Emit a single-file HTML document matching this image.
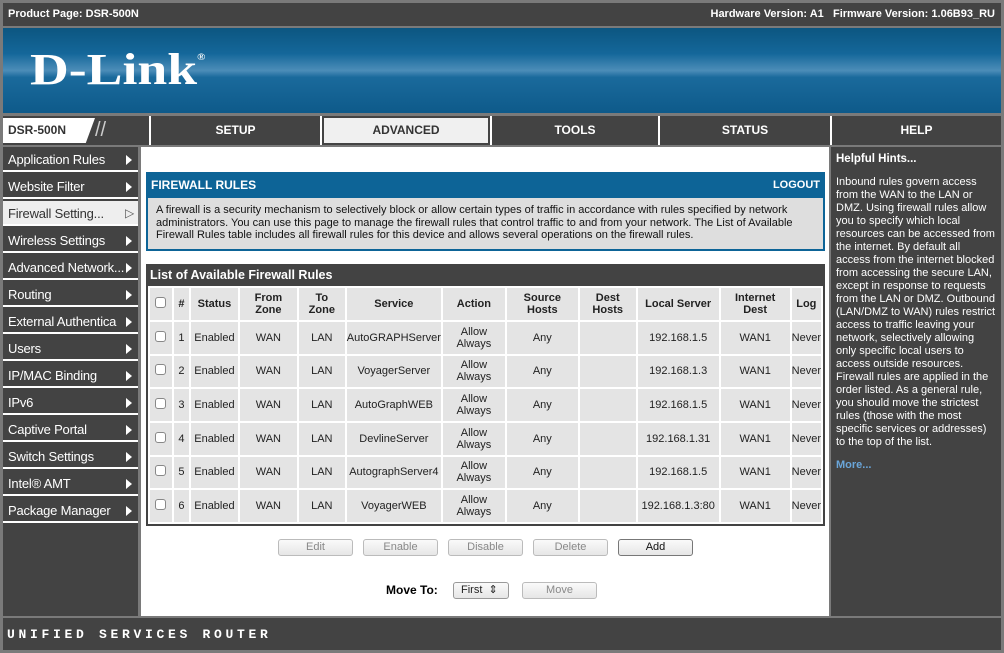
<!DOCTYPE html>
<html><head><style>
*{margin:0;padding:0;box-sizing:border-box}
body{width:1004px;height:653px;background:#7a7a7a;font-family:"Liberation Sans",sans-serif;position:relative;overflow:hidden}
.abs{position:absolute}
#top{left:3px;top:3px;width:998px;height:23px;background:#434343;color:#fff;font-size:11px;font-weight:bold;line-height:23px}
#banner{left:3px;top:28px;width:998px;height:85px;background:linear-gradient(180deg,#0c5680 0%,#14679a 30%,#4c8db8 50%,#1a6a9c 58%,#0e5a8a 100%)}
#logo{left:30px;top:44px;color:#fff;font:bold 44px "Liberation Serif",serif;letter-spacing:0px;transform:scaleX(1.22);transform-origin:left top}
#nav{left:3px;top:116px;width:998px;height:29px;background:#fff}
.tab{position:absolute;top:0;height:29px;background:#434343;color:#fff;font:bold 12px "Liberation Sans",sans-serif;text-align:center;line-height:29px}
#side{left:3px;top:147px;width:135px;height:469px;background:#434343}
.it{position:absolute;left:0;width:135px;height:25px;color:#fff;font:13px "Liberation Sans",sans-serif;line-height:25px;padding-left:5px;border-bottom:2px solid #fff;letter-spacing:-0.2px}
.it:after{content:"";position:absolute;right:6px;top:8px;border-left:6px solid #fff;border-top:5px solid transparent;border-bottom:5px solid transparent}
.it.sel{background:#eee;color:#333}
.it.sel:after{content:"▷";border:none;top:0;right:4px;color:#555;font-size:12px}
#main{left:141px;top:147px;width:688px;height:469px;background:#fff}
#help{left:831px;top:147px;width:170px;height:469px;background:#434343;color:#fff;font-size:11px;line-height:13px;padding:6px 5px}
#foot{left:3px;top:618px;width:998px;height:32px;background:#434343;color:#fff;font:bold 13px "Liberation Mono",monospace;letter-spacing:3.7px;line-height:34px;padding-left:4px}
table{border-collapse:separate;border-spacing:2px;background:#fff;font-size:11px}
td,th{background:#e4e4e4;text-align:center;color:#222;line-height:12px}
th{font-weight:bold;font-size:11px;line-height:12px}
.cb{display:inline-block;width:11px;height:11px;border:1px solid #888;border-radius:3px;background:#fff}
.btn{position:absolute;height:17px;border:1px solid #bbb;border-radius:3px;background:linear-gradient(#fafafa,#e6e6e6);font-size:11px;color:#888;text-align:center;line-height:15px}
</style></head><body>
<div id="top" class="abs"><span style="padding-left:5px">Product Page: DSR-500N</span><span style="position:absolute;right:6px">Hardware Version: A1 &nbsp; Firmware Version: 1.06B93_RU</span></div>
<div id="banner" class="abs"></div>
<div id="logo" class="abs">D-Link<sup style="font-size:9px;vertical-align:top;position:relative;top:8px">®</sup></div>
<div id="nav" class="abs">
<div class="tab" style="left:0;width:146px;background:#434343;text-align:left"><div style="position:absolute;left:0;top:2px;width:92px;height:25px;background:#fff;color:#333;padding-left:5px;line-height:25px;clip-path:polygon(0 0,100% 0,90% 100%,0 100%)">DSR-500N</div><span style="position:absolute;left:92px;color:#ccc;font-size:20px;font-weight:normal">//</span></div>
<div class="tab" style="left:148px;width:169px">SETUP</div>
<div class="tab" style="left:319px;width:168px;background:#434343"><div style="margin:2px;height:25px;background:#f0f0f0;color:#333;line-height:25px">ADVANCED</div></div>
<div class="tab" style="left:489px;width:166px">TOOLS</div>
<div class="tab" style="left:657px;width:170px">STATUS</div>
<div class="tab" style="left:829px;width:169px">HELP</div>
</div>
<div id="side" class="abs">
<div class="it" style="top:0">Application Rules</div>
<div class="it" style="top:27px">Website Filter</div>
<div class="it sel" style="top:54px">Firewall Setting...</div>
<div class="it" style="top:81px">Wireless Settings</div>
<div class="it" style="top:108px">Advanced Network...</div>
<div class="it" style="top:135px">Routing</div>
<div class="it" style="top:162px">External Authentica</div>
<div class="it" style="top:189px">Users</div>
<div class="it" style="top:216px">IP/MAC Binding</div>
<div class="it" style="top:243px">IPv6</div>
<div class="it" style="top:270px">Captive Portal</div>
<div class="it" style="top:297px">Switch Settings</div>
<div class="it" style="top:324px">Intel® AMT</div>
<div class="it" style="top:351px">Package Manager</div>
</div>
<div id="main" class="abs">
<div class="abs" style="left:5px;top:25px;width:679px;height:79px;border:2px solid #0d6497;background:#dedede">
<div style="background:#0d6497;height:24px;color:#fff;font-weight:bold;font-size:12px;line-height:22px;padding-left:3px">FIREWALL RULES<span style="position:absolute;right:3px;font-size:11px">LOGOUT</span></div>
<div style="font-size:11px;line-height:12.5px;color:#111;padding:6px 8px">A firewall is a security mechanism to selectively block or allow certain types of traffic in accordance with rules specified by network administrators. You can use this page to manage the firewall rules that control traffic to and from your network. The List of Available Firewall Rules table includes all firewall rules for this device and allows several operations on the firewall rules.</div>
</div>
<div class="abs" style="left:5px;top:117px;width:679px;height:262px;background:#434343;padding:0 2px 2px 2px">
<div style="color:#fff;font-weight:bold;font-size:12.5px;height:22px;line-height:22px;padding-left:2px">List of Available Firewall Rules</div>
<table style="width:675px;height:238px">
<tr style="height:32px"><th style="width:22px"><span class="cb"></span></th><th style="width:15px">#</th><th style="width:47px">Status</th><th style="width:57px">From<br>Zone</th><th style="width:46px">To<br>Zone</th><th style="width:93px">Service</th><th style="width:62px">Action</th><th style="width:71px">Source<br>Hosts</th><th style="width:56px">Dest<br>Hosts</th><th style="width:81px">Local Server</th><th style="width:69px">Internet<br>Dest</th><th>Log</th></tr>
<tr><td><span class="cb"></span></td><td>1</td><td>Enabled</td><td>WAN</td><td>LAN</td><td>AutoGRAPHServer</td><td>Allow<br>Always</td><td>Any</td><td></td><td>192.168.1.5</td><td>WAN1</td><td>Never</td></tr>
<tr><td><span class="cb"></span></td><td>2</td><td>Enabled</td><td>WAN</td><td>LAN</td><td>VoyagerServer</td><td>Allow<br>Always</td><td>Any</td><td></td><td>192.168.1.3</td><td>WAN1</td><td>Never</td></tr>
<tr><td><span class="cb"></span></td><td>3</td><td>Enabled</td><td>WAN</td><td>LAN</td><td>AutoGraphWEB</td><td>Allow<br>Always</td><td>Any</td><td></td><td>192.168.1.5</td><td>WAN1</td><td>Never</td></tr>
<tr><td><span class="cb"></span></td><td>4</td><td>Enabled</td><td>WAN</td><td>LAN</td><td>DevlineServer</td><td>Allow<br>Always</td><td>Any</td><td></td><td>192.168.1.31</td><td>WAN1</td><td>Never</td></tr>
<tr><td><span class="cb"></span></td><td>5</td><td>Enabled</td><td>WAN</td><td>LAN</td><td>AutographServer4</td><td>Allow<br>Always</td><td>Any</td><td></td><td>192.168.1.5</td><td>WAN1</td><td>Never</td></tr>
<tr><td><span class="cb"></span></td><td>6</td><td>Enabled</td><td>WAN</td><td>LAN</td><td>VoyagerWEB</td><td>Allow<br>Always</td><td>Any</td><td></td><td>192.168.1.3:80</td><td>WAN1</td><td>Never</td></tr>
</table></div>
<div class="btn" style="left:137px;top:392px;width:75px">Edit</div>
<div class="btn" style="left:222px;top:392px;width:75px">Enable</div>
<div class="btn" style="left:307px;top:392px;width:75px">Disable</div>
<div class="btn" style="left:392px;top:392px;width:75px">Delete</div>
<div class="btn" style="left:477px;top:392px;width:75px;border-color:#777;color:#111">Add</div>
<div class="abs" style="left:245px;top:436px;font-weight:bold;font-size:12px">Move To:</div>
<div class="btn" style="left:312px;top:435px;width:56px;border-color:#999;color:#222;text-align:left;padding-left:7px">First &nbsp;⇕</div>
<div class="btn" style="left:381px;top:435px;width:75px">Move</div>
</div>
<div id="help" class="abs"><b style="font-size:11.5px">Helpful Hints...</b><br><div style="margin-top:10px">Inbound rules govern access from the WAN to the LAN or DMZ. Using firewall rules allow you to specify which local resources can be accessed from the internet. By default all access from the internet blocked from accessing the secure LAN, except in response to requests from the LAN or DMZ. Outbound (LAN/DMZ to WAN) rules restrict access to traffic leaving your network, selectively allowing only specific local users to access outside resources. Firewall rules are applied in the order listed. As a general rule, you should move the strictest rules (those with the most specific services or addresses) to the top of the list.</div><div style="margin-top:10px;color:#6aa6da;font-weight:bold">More...</div></div>
<div id="foot" class="abs">UNIFIED SERVICES ROUTER</div>
</body></html>
